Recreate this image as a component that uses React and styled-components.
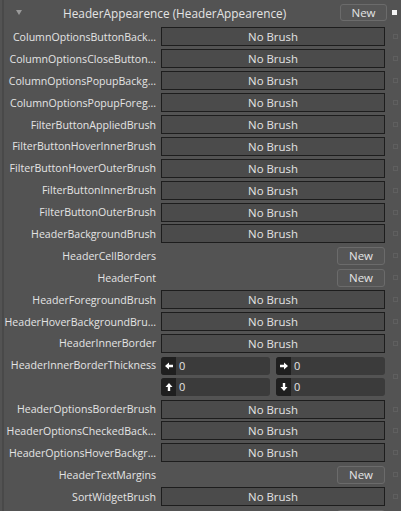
import React from "react";
import styled, { createGlobalStyle } from "styled-components";

const Global = createGlobalStyle`
  html, body { margin: 0; padding: 0; background: #535353; }
  body { width: 401px; height: 511px; overflow: hidden; font-family: "Open Sans", "Noto Sans", sans-serif; }
`;

const Page = styled.div`
  margin-left: 2px;
  border-left: 2px solid #494949;
  height: 511px;
  overflow: hidden;
  background: #535353;
  color: #e4e4e4;
  font-size: 10.6px;
`;

const Header = styled.div`
  height: 26px;
  display: flex;
  align-items: center;
  padding-bottom: 1px;
  box-sizing: border-box;
`;

const Caret = styled.span`
  width: 0;
  height: 0;
  margin-left: 12px;
  border-left: 3px solid transparent;
  border-right: 3px solid transparent;
  border-top: 5px solid #9a9a9a;
`;

const Title = styled.span`
  margin-left: 41px;
  flex: 1;
  white-space: nowrap;
  font-size: 11.8px;
`;

const NewButton = styled.button`
  width: ${(p) => p.$w || 48}px;
  height: ${(p) => p.$h || 18}px;
  padding: 0;
  border: 1px solid #6b6b6b;
  border-radius: 3px;
  background: #565656;
  color: #e4e4e4;
  font: inherit;
  font-size: 11.5px;
  line-height: 1;
  justify-self: end;
`;

const HeaderMark = styled.span`
  width: 5px;
  height: 5px;
  background: #f4f4f4;
  margin: 0 4px 0 5px;
`;

const Row = styled.div`
  display: grid;
  grid-template-columns: 153px 224px 1fr;
  column-gap: 4px;
  align-items: center;
  height: ${(p) => (p.$double ? 43.8 : 21.9)}px;
`;

const Label = styled.div`
  text-align: right;
  white-space: nowrap;
  padding-right: 1px;
  align-self: ${(p) => (p.$top ? "start" : "center")};
  line-height: ${(p) => (p.$top ? "22px" : "normal")};
`;

const Brush = styled.div`
  height: 19px;
  box-sizing: border-box;
  border: 1px solid #1d1d1d;
  background: #4b4b4b;
  display: flex;
  align-items: center;
  justify-content: center;
  font-size: 11.4px;
`;

const Marker = styled.span`
  width: 5px;
  height: 5px;
  box-sizing: border-box;
  border: 1px solid #5f5f5f;
  margin-left: 4px;
`;

const ThicknessGrid = styled.div`
  display: grid;
  grid-template-columns: 1fr 1fr;
  gap: 3px 6px;
`;

const NumField = styled.div`
  height: 18px;
  background: #3b3b3b;
  border-radius: 3px;
  display: flex;
  align-items: center;
  font-size: 11px;
`;

const NumIcon = styled.span`
  width: 15px;
  height: 18px;
  background: #1f1f1f;
  border-radius: 3px 0 0 3px;
  display: flex;
  align-items: center;
  justify-content: center;
  margin-right: 3px;
`;

const Arrow = ({ dir }) => {
  const rot = { left: 180, right: 0, up: -90, down: 90 }[dir];
  return (
    <svg width="8" height="8" viewBox="0 0 8 8" style={{ transform: `rotate(${rot}deg)` }}>
      <path d="M0 2.8H4V0.5L8 4L4 7.5V5.2H0Z" fill="#ffffff" />
    </svg>
  );
};

const rows = [
  { label: "ColumnOptionsButtonBack...", kind: "brush" },
  { label: "ColumnOptionsCloseButton...", kind: "brush" },
  { label: "ColumnOptionsPopupBackg...", kind: "brush" },
  { label: "ColumnOptionsPopupForeg...", kind: "brush" },
  { label: "FilterButtonAppliedBrush", kind: "brush" },
  { label: "FilterButtonHoverInnerBrush", kind: "brush" },
  { label: "FilterButtonHoverOuterBrush", kind: "brush" },
  { label: "FilterButtonInnerBrush", kind: "brush" },
  { label: "FilterButtonOuterBrush", kind: "brush" },
  { label: "HeaderBackgroundBrush", kind: "brush" },
  { label: "HeaderCellBorders", kind: "new" },
  { label: "HeaderFont", kind: "new" },
  { label: "HeaderForegroundBrush", kind: "brush" },
  { label: "HeaderHoverBackgroundBru...", kind: "brush" },
  { label: "HeaderInnerBorder", kind: "brush" },
  { label: "HeaderInnerBorderThickness", kind: "thickness" },
  { label: "HeaderOptionsBorderBrush", kind: "brush" },
  { label: "HeaderOptionsCheckedBack...", kind: "brush" },
  { label: "HeaderOptionsHoverBackgr...", kind: "brush" },
  { label: "HeaderTextMargins", kind: "new" },
  { label: "SortWidgetBrush", kind: "brush" },
  { label: "", kind: "partial" },
];

const Thickness = () => (
  <ThicknessGrid>
    {["left", "right", "up", "down"].map((d) => (
      <NumField key={d}>
        <NumIcon>
          <Arrow dir={d} />
        </NumIcon>
        0
      </NumField>
    ))}
  </ThicknessGrid>
);

export default function App() {
  return (
    <>
      <Global />
      <Page>
        <Header>
          <Caret />
          <Title>HeaderAppearence (HeaderAppearence)</Title>
          <NewButton $w={47} $h={17}>New</NewButton>
          <HeaderMark />
        </Header>
        {rows.map((r, i) => (
          <Row key={i} $double={r.kind === "thickness"}>
            <Label $top={r.kind === "thickness"}>{r.label}</Label>
            {r.kind === "brush" && <Brush>No Brush</Brush>}
            {r.kind === "new" && <NewButton>New</NewButton>}
            {r.kind === "partial" && <NewButton aria-label="New" />}
            {r.kind === "thickness" && <Thickness />}
            <Marker />
          </Row>
        ))}
      </Page>
    </>
  );
}
